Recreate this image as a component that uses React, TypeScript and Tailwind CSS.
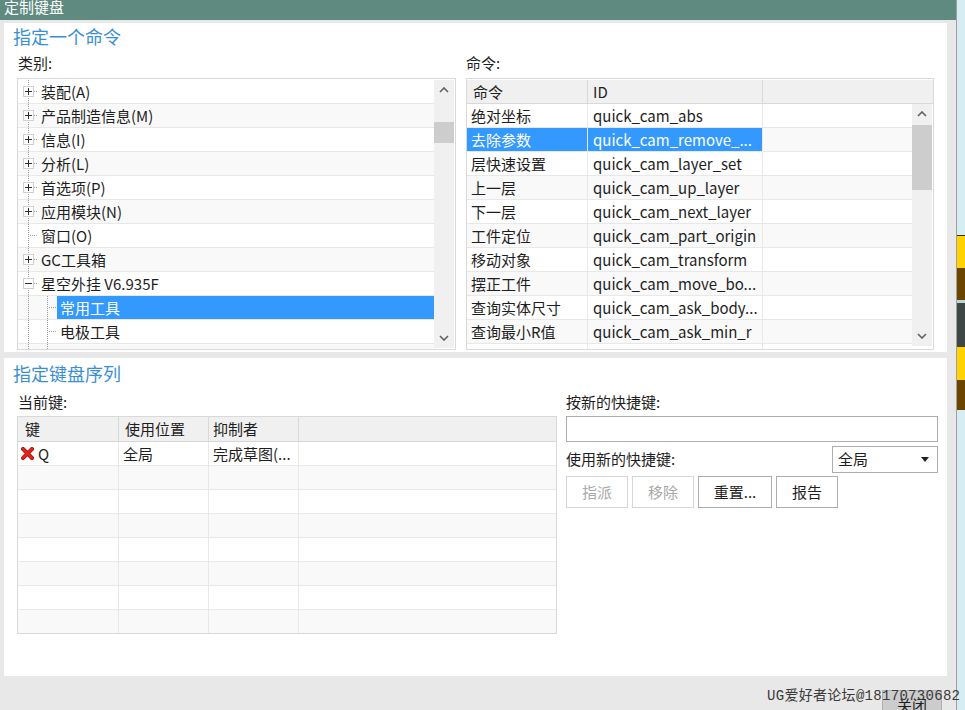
import React from 'react'

const treeItems = [
  { label: '装配(A)', kind: 'plus' },
  { label: '产品制造信息(M)', kind: 'plus' },
  { label: '信息(I)', kind: 'plus' },
  { label: '分析(L)', kind: 'plus' },
  { label: '首选项(P)', kind: 'plus' },
  { label: '应用模块(N)', kind: 'plus' },
  { label: '窗口(O)', kind: 'leaf' },
  { label: 'GC工具箱', kind: 'plus' },
  { label: '星空外挂 V6.935F', kind: 'minus' },
  { label: '常用工具', kind: 'child', selected: true },
  { label: '电极工具', kind: 'child' },
  { label: '', kind: 'child' },
]

const commands = [
  ['绝对坐标', 'quick_cam_abs'],
  ['去除参数', 'quick_cam_remove_...'],
  ['层快速设置', 'quick_cam_layer_set'],
  ['上一层', 'quick_cam_up_layer'],
  ['下一层', 'quick_cam_next_layer'],
  ['工件定位', 'quick_cam_part_origin'],
  ['移动对象', 'quick_cam_transform'],
  ['摆正工件', 'quick_cam_move_bo...'],
  ['查询实体尺寸', 'quick_cam_ask_body...'],
  ['查询最小R值', 'quick_cam_ask_min_r'],
  ['', ''],
]

function Chevron({ down }: { down?: boolean }) {
  return (
    <svg width="10" height="6" viewBox="0 0 10 6">
      <path
        d={down ? 'M1 1 L5 5 L9 1' : 'M1 5 L5 1 L9 5'}
        fill="none"
        stroke="#606060"
        strokeWidth="1.6"
      />
    </svg>
  )
}

function ScrollBar({ gap, thumb }: { gap: string; thumb: string }) {
  return (
    <div className="w-[20px] flex flex-col bg-[#f0f0f0]">
      <div className="h-[20px] flex items-center justify-center">
        <Chevron />
      </div>
      <div className={gap} />
      <div className={`${thumb} bg-[#cdcdcd]`} />
      <div className="flex-1" />
      <div className="h-[20px] flex items-center justify-center">
        <Chevron down />
      </div>
    </div>
  )
}

// dotted tree connectors for one row
function TreeGutter({ kind }: { kind: string }) {
  const child = kind === 'child'
  const dots = { stroke: '#9a9a9a', strokeDasharray: '1 1', shapeRendering: 'crispEdges' as const }
  return (
    <svg width={child ? 39 : 20} height="23" className="shrink-0">
      <line x1="10.5" y1="0" x2="10.5" y2="23" {...dots} />
      {child && (
        <>
          <line x1="29.5" y1="0" x2="29.5" y2="23" {...dots} />
          <line x1="31" y1="11.5" x2="39" y2="11.5" {...dots} />
        </>
      )}
      {kind === 'leaf' && <line x1="12" y1="11.5" x2="20" y2="11.5" {...dots} />}
      {(kind === 'plus' || kind === 'minus') && (
        <>
          <line x1="16" y1="11.5" x2="20" y2="11.5" {...dots} />
          <rect x="5.5" y="6.5" width="10" height="10" fill="#fff" stroke="#d0d0d0" shapeRendering="crispEdges" />
          <line x1="7" y1="11.5" x2="14" y2="11.5" stroke="#333" shapeRendering="crispEdges" />
          {kind === 'plus' && (
            <line x1="10.5" y1="8" x2="10.5" y2="15" stroke="#333" shapeRendering="crispEdges" />
          )}
        </>
      )}
    </svg>
  )
}

function RedX() {
  return (
    <svg width="13" height="13" viewBox="0 0 13 13">
      <path d="M2 2 L11 11 M11 2 L2 11" stroke="#a8170f" strokeWidth="4" strokeLinecap="square" />
      <path d="M2 2 L11 11 M11 2 L2 11" stroke="#e2261b" strokeWidth="2.4" strokeLinecap="square" />
    </svg>
  )
}

export default function App() {
  return (
    <div className="relative w-[965px] h-[710px] overflow-hidden flex bg-[#d7edf4] text-[15px] text-[#1e1e1e] font-['Noto_Sans_CJK_SC','Noto_Sans',sans-serif]">
      <div className="w-[957px] h-full flex flex-col shrink-0 bg-[#e8e8e8] border-r border-[#a0a0a0]">
        {/* title bar */}
        <div className="h-[20px] shrink-0 bg-[#5e8a80] text-white pl-[4px] leading-[14px] overflow-hidden">
          定制键盘
        </div>

        {/* 指定一个命令 */}
        <div className="mt-[3px] ml-[4px] w-[943px] h-[329px] shrink-0 bg-white flex flex-col">
          <div className="h-[25px] pl-[9px] text-[18px] leading-[26px] text-[#3a8fd4]">指定一个命令</div>
          <div className="flex pl-[13px] gap-[10px]">
            <div className="w-[439px] flex flex-col">
              <div className="h-[30px] leading-[30px] pl-[1px]">类别:</div>
              <div className="h-[272px] border border-[#d9d9d9] flex overflow-hidden">
                <div className="flex-1 pt-[1px] flex flex-col overflow-hidden">
                  {treeItems.map((item, i) => (
                    <div
                      key={i}
                      className={`h-[24px] shrink-0 flex border-b border-[#e8e8e8] ${i % 2 ? 'bg-[#f9f9f9]' : 'bg-white'}`}
                    >
                      <TreeGutter kind={item.kind} />
                      <div
                        className={`flex-1 pl-[3px] leading-[23px] whitespace-nowrap ${
                          item.selected ? 'bg-[#3399ff] text-white' : ''
                        }`}
                      >
                        {item.label}
                      </div>
                    </div>
                  ))}
                </div>
                <div className="py-[1px] mr-[1px] flex">
                  <ScrollBar gap="h-[22px]" thumb="h-[21px]" />
                </div>
              </div>
            </div>

            <div className="w-[468px] flex flex-col">
              <div className="h-[30px] leading-[30px]">命令:</div>
              <div className="h-[272px] border border-[#d9d9d9] pt-[1px] flex flex-col overflow-hidden">
                <div className="h-[24px] shrink-0 flex bg-[#f0f0f0] border-b border-[#d9d9d9] leading-[23px]">
                  <div className="w-[121px] pl-[6px] border-r border-[#d9d9d9]">命令</div>
                  <div className="w-[175px] pl-[5px] border-r border-[#d9d9d9]">ID</div>
                  <div className="flex-1" />
                </div>
                <div className="flex-1 flex overflow-hidden">
                  <div className="flex-1 flex flex-col overflow-hidden">
                    {commands.map(([name, id], i) => {
                      const sel = i === 1
                      return (
                        <div
                          key={i}
                          className={`h-[24px] shrink-0 flex border-b border-[#e8e8e8] leading-[23px] whitespace-nowrap ${
                            i % 2 ? 'bg-[#f9f9f9]' : 'bg-white'
                          }`}
                        >
                          <div
                            className={`w-[121px] pl-[4px] border-r border-[#e8e8e8] ${sel ? 'bg-[#3399ff] text-white' : ''}`}
                          >
                            {name}
                          </div>
                          <div
                            className={`w-[175px] pl-[5px] overflow-hidden border-r border-[#e8e8e8] ${
                              sel ? 'bg-[#3399ff] text-white' : ''
                            }`}
                          >
                            {id}
                          </div>
                          <div className="flex-1" />
                        </div>
                      )
                    })}
                  </div>
                  <div className="pb-[3px] mr-[1px] flex">
                    <ScrollBar gap="h-[1px]" thumb="h-[65px]" />
                  </div>
                </div>
              </div>
            </div>
          </div>
        </div>

        {/* 指定键盘序列 */}
        <div className="mt-[6px] ml-[4px] w-[943px] h-[318px] shrink-0 bg-white pt-[2px] flex flex-col">
          <div className="h-[26px] pl-[9px] text-[18px] leading-[26px] text-[#3a8fd4]">指定键盘序列</div>
          <div className="flex pl-[13px] gap-[9px]">
            <div className="w-[540px] flex flex-col">
              <div className="h-[30px] leading-[32px] pl-[1px]">当前键:</div>
              <div className="h-[218px] border border-[#d9d9d9] flex flex-col overflow-hidden">
                <div className="h-[25px] shrink-0 flex bg-[#f0f0f0] border-b border-[#d6d6d6] leading-[24px]">
                  <div className="w-[101px] pl-[7px] border-r border-[#d9d9d9]">键</div>
                  <div className="w-[90px] pl-[6px] border-r border-[#d9d9d9]">使用位置</div>
                  <div className="w-[90px] pl-[4px] border-r border-[#d9d9d9]">抑制者</div>
                  <div className="flex-1 mr-[1px]" />
                </div>
                {Array.from({ length: 8 }).map((_, i) => (
                  <div
                    key={i}
                    className={`h-[24px] shrink-0 flex border-b border-[#e8e8e8] leading-[23px] whitespace-nowrap ${
                      i % 2 ? 'bg-[#f9f9f9]' : 'bg-white'
                    }`}
                  >
                    <div className="w-[101px] pl-[3px] border-r border-[#e8e8e8] flex items-center gap-[4px]">
                      {i === 0 && (
                        <>
                          <RedX />
                          <span>Q</span>
                        </>
                      )}
                    </div>
                    <div className="w-[90px] pl-[4px] border-r border-[#e8e8e8]">{i === 0 ? '全局' : ''}</div>
                    <div className="w-[90px] pl-[4px] border-r border-[#e8e8e8]">{i === 0 ? '完成草图(...' : ''}</div>
                    <div className="flex-1" />
                  </div>
                ))}
              </div>
            </div>

            <div className="w-[372px] flex flex-col">
              <div className="h-[30px] leading-[31px]">按新的快捷键:</div>
              <div className="h-[26px] border border-[#adadad] bg-white" />
              <div className="mt-[4px] h-[27px] flex items-center justify-between">
                <span>使用新的快捷键:</span>
                <div className="w-[106px] h-[27px] border border-[#adadad] bg-white flex items-center justify-between pl-[5px] pr-[8px]">
                  <span>全局</span>
                  <svg width="8" height="5" viewBox="0 0 8 5">
                    <path d="M0 0 H8 L4 5 Z" fill="#222" />
                  </svg>
                </div>
              </div>
              <div className="mt-[3px] flex gap-[4px]">
                <button className="w-[62px] h-[32px] border border-[#d6d6d6] bg-white text-[#a8a8a8]">指派</button>
                <button className="w-[62px] h-[32px] border border-[#d6d6d6] bg-white text-[#a8a8a8]">移除</button>
                <button className="w-[74px] h-[32px] border border-[#adadad] bg-white">重置...</button>
                <button className="w-[62px] h-[32px] border border-[#adadad] bg-white">报告</button>
              </div>
            </div>
          </div>
        </div>

        {/* bottom bar */}
        <div className="flex-1 flex justify-end pr-[14px] pt-[14px]">
          <button className="w-[60px] h-[30px] shrink-0 bg-[#cccccc] border border-[#b0b0b0] leading-[28px]">关闭</button>
        </div>
      </div>

      {/* desktop strip behind the dialog */}
      <div className="flex-1 flex flex-col">
        <div className="h-[235px] bg-[#d7edf4]" />
        <div className="h-[33px] bg-[#ffd200] border-t border-[#333]" />
        <div className="h-[32px] bg-[#6b4500]" />
        <div className="h-[3px] bg-[#bcd6d8]" />
        <div className="h-[44px] bg-[#3e4646]" />
        <div className="h-[33px] bg-[#ffd200]" />
        <div className="h-[30px] bg-[#6b4500]" />
        <div className="flex-1 bg-[#d7edf4]" />
      </div>

      {/* forum watermark */}
      <div className="absolute left-[767px] top-[687px] text-[14px] leading-[18px] tracking-[0.3px] text-[#3a3a3a] whitespace-nowrap font-['Liberation_Mono','Noto_Sans_CJK_SC',monospace]">
        UG爱好者论坛@18170730682
      </div>
    </div>
  )
}
